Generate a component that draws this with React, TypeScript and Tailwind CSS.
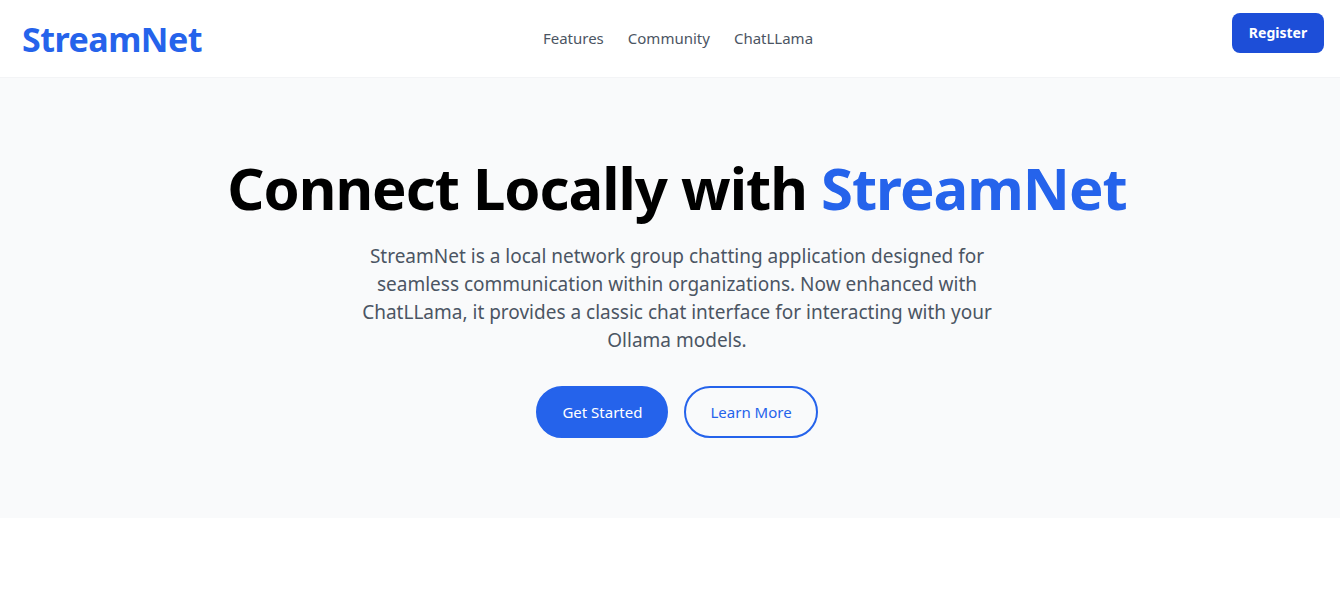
import React from "react";

export default function App() {
  return (
    <div className="min-h-[601px] bg-white" style={{ fontFamily: '"Noto Sans", "Open Sans", sans-serif' }}>
      <header className="grid h-[78px] grid-cols-3 items-center border-b border-gray-100 bg-white pl-[22px] pr-4 shadow-[0_1px_2px_rgba(0,0,0,0.03)]">
        <div className="text-[34px] font-bold leading-10 tracking-[-0.5px] text-[#2563eb]">StreamNet</div>
        <nav className="flex items-center justify-self-center gap-6 pl-[10px] text-[15px] text-[#4b5563]">
          <a href="#">Features</a>
          <a href="#">Community</a>
          <a href="#">ChatLLama</a>
        </nav>
        <div className="mb-[11px] justify-self-end">
          <button className="h-10 w-[92px] rounded-lg bg-[#1d4ed8] text-sm font-bold text-white">Register</button>
        </div>
      </header>
      <section className="flex flex-col items-center bg-[#f9fafb] pb-20 pl-[14px] pt-20 text-center">
        <h1 className="mb-6 text-[58px] font-bold leading-[60px] tracking-[-1px] text-black">
          Connect Locally with <span className="text-[#2563eb]">StreamNet</span>
        </h1>
        <p className="mb-8 max-w-[640px] text-[19px] leading-7 text-[#4b5563]">
          StreamNet is a local network group chatting application designed for seamless communication within organizations. Now enhanced with ChatLLama, it provides a classic chat interface for interacting with your Ollama models.
        </p>
        <div className="flex gap-4">
          <button className="rounded-full border-2 border-[#2563eb] bg-[#2563eb] px-6 py-3 text-[15px] leading-6 text-white">Get Started</button>
          <button className="rounded-full border-2 border-[#2563eb] px-6 py-3 text-[15px] leading-6 text-[#2563eb]">Learn More</button>
        </div>
      </section>
    </div>
  );
}
